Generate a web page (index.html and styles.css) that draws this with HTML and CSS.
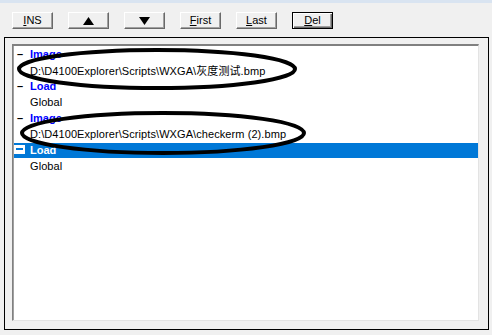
FILE: index.html
```html
<!DOCTYPE html>
<html>
<head>
<meta charset="utf-8">
<link rel="stylesheet" href="styles.css">
</head>
<body>
<div class="topband"></div>
<div class="toolbar">
  <button class="btn"><span class="u">I</span>NS</button>
  <button class="btn"><svg width="11" height="8" viewBox="0 0 11 8"><polygon points="5.5,0 11,8 0,8" fill="#000"/></svg></button>
  <button class="btn"><svg width="11" height="8" viewBox="0 0 11 8"><polygon points="0,0 11,0 5.5,8" fill="#000"/></svg></button>
  <button class="btn"><span class="u">F</span>irst</button>
  <button class="btn"><span class="u">L</span>ast</button>
  <button class="btn default"><span class="u">D</span>el</button>
</div>
<div class="frame">
  <div class="list">
    <div class="row"><span class="exp">–</span><span class="title">Image</span></div>
    <div class="row"><span class="exp"></span><span class="val">D:\D4100Explorer\Scripts\WXGA\灰度测试.bmp</span></div>
    <div class="row"><span class="exp">–</span><span class="title">Load</span></div>
    <div class="row"><span class="exp"></span><span class="val">Global</span></div>
    <div class="row"><span class="exp">–</span><span class="title">Image</span></div>
    <div class="row"><span class="exp"></span><span class="val">D:\D4100Explorer\Scripts\WXGA\checkerm (2).bmp</span></div>
    <div class="row selected"><span class="exp"><span class="box"></span></span><span class="title">Load</span></div>
    <div class="row"><span class="exp"></span><span class="val">Global</span></div>
  </div>
</div>
<svg class="marks" width="492" height="335" viewBox="0 0 492 335">
  <ellipse cx="157" cy="69" rx="138" ry="19" fill="none" stroke="#000" stroke-width="4"/>
  <ellipse cx="163" cy="133" rx="141" ry="20" fill="none" stroke="#000" stroke-width="4"/>
</svg>
</body>
</html>
```
FILE: styles.css
```css
html, body {
  margin: 0;
  padding: 0;
}
body {
  width: 492px;
  height: 335px;
  background: #f0f0f0;
  font-family: "Liberation Sans", Arial, "Noto Sans CJK SC", sans-serif;
  font-size: 11px;
  position: relative;
  overflow: hidden;
}
.topband {
  height: 3px;
  background: #d9e4f1;
}
.toolbar {
  display: flex;
  gap: 15px;
  padding: 9px 0 0 12px;
  height: 17px;
}
.btn {
  box-sizing: border-box;
  width: 41px;
  height: 17px;
  margin: 0;
  padding: 0;
  background: #f0f0f0;
  border: 1px solid;
  border-color: #ffffff #696969 #696969 #ffffff;
  box-shadow: inset -1px -1px 0 #a0a0a0;
  font-family: "Liberation Sans", Arial, sans-serif;
  font-size: 11px;
  color: #000;
  display: flex;
  align-items: center;
  justify-content: center;
  line-height: 13px;
}
.btn.default {
  border-color: #000;
  box-shadow: inset 1px 1px 0 #fff, inset -1px -1px 0 #696969, inset -2px -2px 0 #a0a0a0;
}
.u {
  text-decoration: underline;
}
.frame {
  box-sizing: border-box;
  margin: 8px 0 0 4px;
  width: 485px;
  height: 293px;
  border: 1px solid #000;
  padding: 6px 9px 8px 7px;
}
.list {
  box-sizing: border-box;
  height: 100%;
  background: #fff;
  border-style: solid;
  border-width: 2px 1px 1px 1px;
  border-color: #808080 #e3e3e3 #e3e3e3 #808080;
  box-shadow: inset 1px 0 0 #a0a0a0;
  padding: 1px 0 0 1px;
}
.row {
  box-sizing: border-box;
  display: flex;
  align-items: center;
  height: 16px;
  padding-bottom: 3px;
  white-space: nowrap;
  letter-spacing: 0.08px;
}
.exp {
  box-sizing: border-box;
  flex: none;
  width: 16px;
  padding-left: 3px;
  display: flex;
  align-items: center;
  justify-content: flex-start;
  font-weight: bold;
  color: #000;
}
.title {
  font-weight: bold;
  color: #0000ff;
  letter-spacing: 0;
}
.val {
  color: #000;
}
.row.selected {
  background: #0078d7;
  height: 15px;
  margin-bottom: 1px;
  padding-bottom: 2px;
}
.row.selected .title {
  color: #fff;
}
.box {
  display: block;
  width: 11px;
  height: 9px;
  margin-left: -3px;
  background: #fff;
  position: relative;
}
.box::after {
  content: "";
  position: absolute;
  left: 2px;
  top: 3px;
  width: 7px;
  height: 2px;
  background: #0078d7;
}
.marks {
  position: absolute;
  left: 0;
  top: 0;
  pointer-events: none;
}
```
